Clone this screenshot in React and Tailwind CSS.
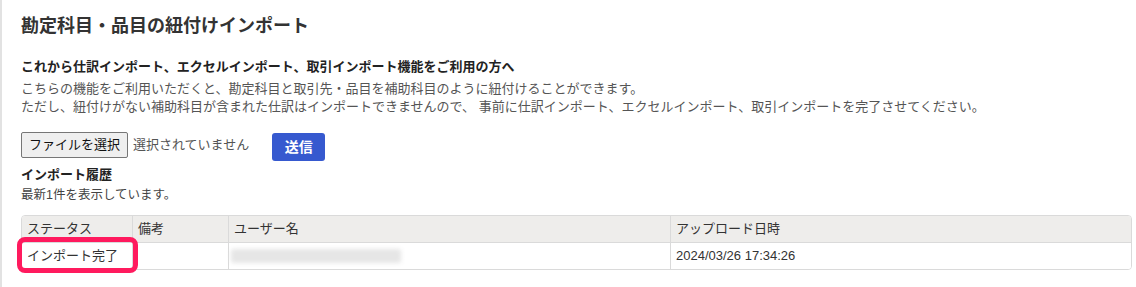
export default function App() {
  const font = { fontFamily: '"Liberation Sans", "Noto Sans CJK JP", sans-serif' };
  return (
    <div
      style={font}
      className="w-[1136px] h-[287px] bg-white border-l-2 border-[#e2e2e2] pl-[19px] pr-[5px] text-[#333] overflow-hidden"
    >
      <h1 className="pt-[13px] text-[18px] leading-[26px] font-bold text-[#333]">
        勘定科目・品目の紐付けインポート
      </h1>
      <p className="mt-[19px] text-[13px] leading-[18px] font-bold text-[#222]">
        これから仕訳インポート、エクセルインポート、取引インポート機能をご利用の方へ
      </p>
      <div className="mt-[4px] text-[13px] leading-[18px] text-[#555]">
        <p>こちらの機能をご利用いただくと、勘定科目と取引先・品目を補助科目のように紐付けることができます。</p>
        <p>ただし、紐付けがない補助科目が含まれた仕訳はインポートできませんので、 事前に仕訳インポート、エクセルインポート、取引インポートを完了させてください。</p>
      </div>
      <div className="mt-[16px] flex items-start">
        <div className="h-[26px] w-[107px] flex items-center justify-center border border-[#767676] bg-[#efefef] rounded-[2px] text-[13px] text-[#111]">
          ファイルを選択
        </div>
        <span className="ml-[5px] h-[26px] flex items-center text-[13px] text-[#555]">選択されていません</span>
        <button className="ml-[23px] mt-px h-[28px] w-[53px] rounded-[3px] bg-[#3659cf] text-white text-[14px] font-bold flex items-center justify-center">
          送信
        </button>
      </div>
      <p className="mt-[5px] text-[13px] leading-[18px] font-bold text-[#222]">インポート履歴</p>
      <p className="mt-[2px] text-[12.5px] leading-[18px] text-[#444]">最新1件を表示しています。</p>
      <div className="relative mt-[11px] w-[1111px]">
        <div className="border border-[#dadada] rounded-[4px] overflow-hidden text-[13px] text-[#333]">
          <div className="grid grid-cols-[110px_96px_442px_1fr] bg-[#eeedeb] border-b border-[#dadada] h-[27px]">
            <div className="flex items-center px-[5px]">ステータス</div>
            <div className="flex items-center px-[5px] border-l border-[#dadada]">備考</div>
            <div className="flex items-center px-[5px] border-l border-[#dadada]">ユーザー名</div>
            <div className="flex items-center px-[5px] border-l border-[#dadada]">アップロード日時</div>
          </div>
          <div className="grid grid-cols-[110px_96px_442px_1fr] bg-white h-[26px]">
            <div className="flex items-center px-[5px]">インポート完了</div>
            <div className="border-l border-[#dadada]"></div>
            <div className="flex items-center pl-[2px] border-l border-[#dadada]">
              <div className="w-[170px] h-[14px] bg-[#e6e6e6] blur-[2px] rounded-[2px]"></div>
            </div>
            <div className="flex items-center px-[5px] border-l border-[#dadada]">2024/03/26 17:34:26</div>
          </div>
        </div>
        <div className="absolute left-[-4px] top-[22px] w-[121px] h-[36px] border-[5px] border-[#ff1a5e] rounded-[8px]"></div>
      </div>
    </div>
  );
}
